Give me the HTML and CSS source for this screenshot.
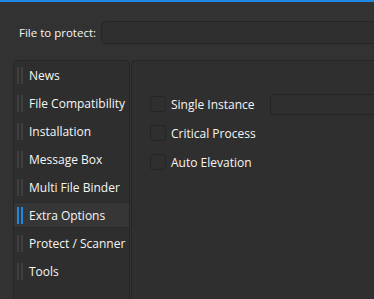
FILE: index.html
```html
<!DOCTYPE html>
<html lang="en">
<head>
  <meta charset="UTF-8">
  <title>Extra Options</title>
  <link rel="stylesheet" href="styles.css">
</head>
<body>
  <div class="file-row">
    <span class="file-label">File to protect:</span>
    <div class="text-box file-box"></div>
  </div>
  <div class="main">
    <div class="sidebar">
      <div class="nav-item"><span class="bars"><i></i><i></i></span>News</div>
      <div class="nav-item"><span class="bars"><i></i><i></i></span>File Compatibility</div>
      <div class="nav-item"><span class="bars"><i></i><i></i></span>Installation</div>
      <div class="nav-item"><span class="bars"><i></i><i></i></span>Message Box</div>
      <div class="nav-item"><span class="bars"><i></i><i></i></span>Multi File Binder</div>
      <div class="nav-item active"><span class="bars"><i></i><i></i></span>Extra Options</div>
      <div class="nav-item"><span class="bars"><i></i><i></i></span>Protect / Scanner</div>
      <div class="nav-item"><span class="bars"><i></i><i></i></span>Tools</div>
    </div>
    <div class="panel">
      <div class="option">
        <span class="check"></span>
        <span class="option-label">Single Instance</span>
        <div class="text-box instance-box"></div>
      </div>
      <div class="option">
        <span class="check"></span>
        <span class="option-label">Critical Process</span>
      </div>
      <div class="option">
        <span class="check"></span>
        <span class="option-label">Auto Elevation</span>
      </div>
    </div>
  </div>
</body>
</html>
```

FILE: styles.css
```css
html {
  overflow: hidden;
}
body {
  margin: 0;
  height: 299px;
  overflow: hidden;
  display: flex;
  flex-direction: column;
  background: #323232;
  border-top: 2px solid #1e88e5;
  font-family: 'Open Sans', 'Noto Sans', Arial, sans-serif;
  font-size: 12px;
  color: #f6f6f6;
  box-sizing: border-box;
}
.file-row {
  display: flex;
  align-items: center;
  padding: 19px 0 0 19px;
}
.file-label {
  width: 82px;
  font-size: 11.5px;
}
.text-box {
  background: #2f2f2f;
  border: 1px solid #252525;
  border-radius: 4px;
  box-sizing: border-box;
}
.file-box {
  flex: 1;
  height: 23px;
  margin-right: -10px;
}
.main {
  flex: 1;
  display: flex;
  gap: 1px;
  margin-top: 16px;
  padding-left: 13px;
  min-height: 0;
}
.sidebar {
  width: 117px;
  flex: none;
  display: flex;
  flex-direction: column;
  gap: 2px;
  padding-top: 1px;
  background: #2e2e2e;
  border: 1px solid #262626;
  border-bottom: none;
  border-radius: 5px 5px 0 0;
  box-sizing: border-box;
}
.nav-item {
  display: flex;
  align-items: center;
  gap: 6px;
  height: 26px;
  flex: none;
  padding-left: 3px;
  white-space: nowrap;
  border-top: 1px solid transparent;
  border-bottom: 1px solid transparent;
  box-sizing: border-box;
}
.nav-item.active {
  background: #363636;
  border-color: #292929;
}
.bars {
  display: flex;
  gap: 2px;
}
.bars i {
  width: 2px;
  height: 17px;
  background: #3f3f3f;
}
.active .bars i {
  background: #1e88e5;
}
.panel {
  flex: 1;
  margin-right: -10px;
  background: #2f2f2f;
  border: 1px solid #262626;
  border-bottom: none;
  border-radius: 5px 5px 0 0;
  padding: 32px 0 0 18px;
  display: flex;
  flex-direction: column;
  gap: 7px;
}
.option {
  display: flex;
  align-items: center;
  height: 22px;
  flex: none;
}
.check {
  width: 16px;
  height: 16px;
  margin-right: 5px;
  border: 1px solid #252525;
  border-radius: 3px;
  background: #2f2f2f;
  box-sizing: border-box;
}
.option-label {
  width: 99px;
}
.instance-box {
  flex: 1;
  height: 21px;
}
```
